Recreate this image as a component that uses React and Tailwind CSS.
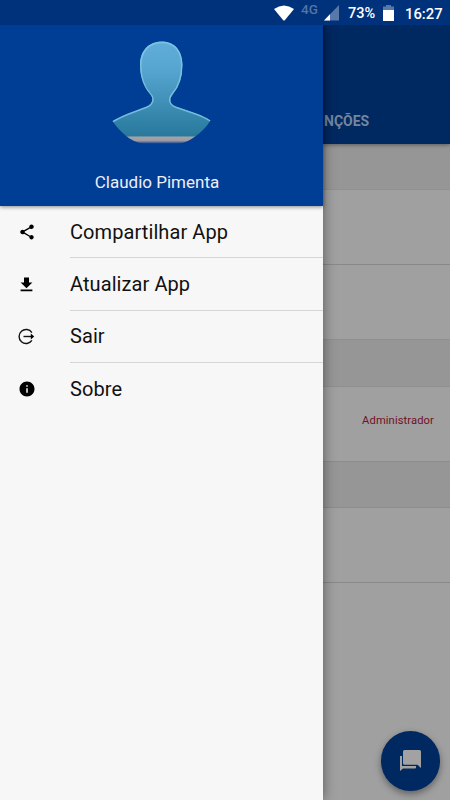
import React from "react";
import { MdShare, MdInfo } from "react-icons/md";

const LogoutIcon = () => (
  <svg width="17" height="17" viewBox="0 0 17 17" fill="none" stroke="#111" strokeWidth="1.4">
    <path d="M13.9 4.6A7 7 0 1 0 13.9 12.4" />
    <path d="M5.5 8.5H14" />
    <path d="M12.8 5.4L16.2 8.5L12.8 11.6Z" fill="#000" stroke="none" />
  </svg>
);

const DownloadIcon = () => (
  <svg width="17" height="17" viewBox="0 0 17 17" fill="#000">
    <path d="M6 1.4h5v5h3.4L8.5 12.2 2.6 6.4H6zM2.6 13.6h11.8v1.6H2.6z" />
  </svg>
);

const menuItems = [
  { label: "Compartilhar App", icon: <MdShare size={18} /> },
  { label: "Atualizar App", icon: <DownloadIcon /> },
  { label: "Sair", icon: <LogoutIcon /> },
  { label: "Sobre", icon: <MdInfo size={18} /> },
];

const StatusBar = () => (
  <header className="z-20 flex h-[25px] shrink-0 items-center justify-end bg-[#00317b] pr-[7px] text-white">
    <svg width="20" height="16" viewBox="0 0 20 16" className="mr-[7px]">
      <path d="M0 4Q10 -3.2 20 4L10.8 15.2Q10 16 9.2 15.2Z" fill="#fff" />
    </svg>
    <span className="mr-[5px] w-[18px] pb-[6px] text-[13.5px] font-medium leading-none text-[#5274a7]">4G</span>
    <svg width="16" height="16" viewBox="0 0 16 16" className="mr-[8px]">
      <path d="M15 0V15.5H0Z" fill="#5878aa" />
      <path d="M6 9.3V15.5H0Z" fill="#fff" />
    </svg>
    <span className="mr-[7px] w-[28px] whitespace-nowrap pt-[4px] text-[14.5px] font-medium leading-none">73%</span>
    <svg width="11" height="16" viewBox="0 0 11 16" className="mr-[11px]">
      <path d="M3 0H8V1.5H11V5H0V1.5H3Z" fill="#5878aa" />
      <path d="M0 5H11V16H0Z" fill="#fff" />
    </svg>
    <span className="w-[38px] whitespace-nowrap pt-[4px] text-[14.8px] font-medium leading-none">16:27</span>
  </header>
);

const Avatar = () => (
  <svg width="100" height="103" viewBox="0 0 100 103">
    <defs>
      <linearGradient id="skin" x1="0" y1="0" x2="0" y2="1">
        <stop offset="0" stopColor="#62add9" />
        <stop offset="0.3" stopColor="#56a5d1" />
        <stop offset="1" stopColor="#27789b" />
      </linearGradient>
      <linearGradient id="base" x1="0" y1="0" x2="0" y2="1">
        <stop offset="0" stopColor="#a8a5a8" />
        <stop offset="0.6" stopColor="#9b9aa5" />
        <stop offset="1" stopColor="#1b4a93" />
      </linearGradient>
      <clipPath id="bust">
        <path d="M50 0.5C36 0.5 28 10 28 24C28 37 32.5 47 38 53Q41 56.5 40 60Q39 63.5 34.5 65.5L16 72.5Q6 76.5 0.5 80Q7 90 17.5 97.5Q26 103 37 103H65Q74 102 81 97Q92 90 98.5 79.5Q93 75.5 83 72L64 65.5Q59 63.5 58.5 60Q58 56.5 61 53Q70.5 42 70.5 24C70.5 10 63 0.5 50 0.5Z" />
      </clipPath>
    </defs>
    <g clipPath="url(#bust)">
      <rect width="100" height="96" fill="url(#skin)" />
      <rect y="95.5" width="100" height="7" fill="url(#base)" />
      <path
        d="M0 81Q6 77 16 73L34.5 66Q39.5 64 40.5 60Q41.5 56 38 53C32.5 47 28.5 37 28.5 24C28.5 10.5 37 1.3 50 1.3C63 1.3 70 10.5 70 24Q70 42 60.5 53Q57.5 56.5 58 60Q59 64 64 66L83 72.5Q93 76 99 80"
        fill="none"
        stroke="#83c9e3"
        strokeWidth="2"
        opacity="0.8"
      />
    </g>
  </svg>
);

const Drawer = () => (
  <aside className="z-10 flex w-[323px] shrink-0 flex-col bg-[#f7f7f7] shadow-[0_0_12px_rgba(0,0,0,0.45)]">
    <div className="flex h-[181px] flex-col items-center bg-[#003d94] pt-[16px] shadow-[0_1px_4px_rgba(0,0,0,0.45)]">
      <Avatar />
      <p className="mt-[28px] pr-[9px] text-[17px] leading-[20px] text-[#eeeef7]">Claudio Pimenta</p>
    </div>
    <nav className="flex flex-col">
      {menuItems.map((item, i) => (
        <div key={item.label} className="flex h-[52.4px] items-center">
          <span className="flex w-[70px] items-center pl-[17.5px] text-black">{item.icon}</span>
          <span
            className={`flex h-full flex-1 items-center text-[20px] tracking-[0.08px] text-[#111] ${
              i < menuItems.length - 1 ? "border-b border-[#d6d6d6]" : ""
            }`}
          >
            {item.label}
          </span>
        </div>
      ))}
    </nav>
  </aside>
);

const Content = () => (
  <main className="flex min-w-0 flex-1 flex-col bg-[#a0a0a0]">
    <div className="z-[1] flex h-[119px] items-end bg-[#002861] pb-[14px] pl-[1px] text-[14px] font-bold leading-[17px] text-[#72869f] shadow-[0_1px_4px_rgba(0,0,0,0.4)]">
      NÇÕES
    </div>
    <div className="h-[46px] border-b border-[#919191] bg-[#969696]" />
    <div className="h-[75px] border-b border-[#898989]" />
    <div className="h-[74px]" />
    <div className="h-[48px] border-y border-[#8f8f8f] bg-[#969696]" />
    <div className="flex h-[74px] items-center justify-end pr-[16px] pb-[6px] text-[11.2px] tracking-[0.1px] text-[#711127]">
      Administrador
    </div>
    <div className="h-[47px] border-y border-[#8c8c8c] bg-[#969696]" />
    <div className="h-[75px] border-b border-[#898989]" />
    <div className="flex flex-1 items-end justify-end pr-[10px] pb-[9.5px]">
      <button className="flex size-[59.5px] items-center justify-center rounded-full bg-[#002861] pb-[1px] shadow-[0_3px_7px_rgba(0,0,0,0.4)]">
        <svg width="21" height="21" viewBox="0 0 21 21" fill="#a2a2a2">
          <path d="M4.5 0H19.5Q21 0 21 1.5V18L17.5 14.8H4.5Q3 14.8 3 13.3V1.5Q3 0 4.5 0Z" />
          <path d="M0 6H2V16H16V17.5Q16 18.4 15 18.4H3L0 21Z" />
        </svg>
      </button>
    </div>
  </main>
);

const App = () => {
  return (
    <div className="flex h-[800px] w-[450px] flex-col overflow-hidden font-[Roboto,sans-serif]">
      <StatusBar />
      <div className="flex flex-1">
        <Drawer />
        <Content />
      </div>
    </div>
  );
};

export default App;
